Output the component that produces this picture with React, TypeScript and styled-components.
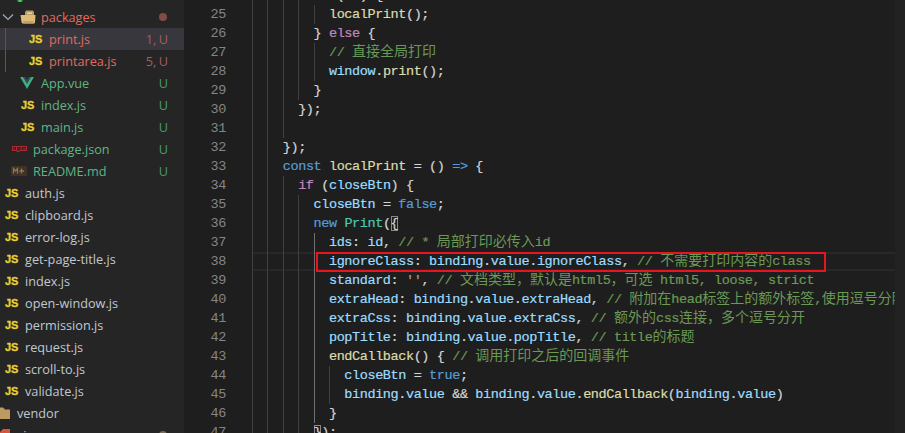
import React from 'react';
import styled, { createGlobalStyle } from 'styled-components';

const Global = createGlobalStyle`
  html, body { margin: 0; padding: 0; background: #1e1e1e; }
`;

const Page = styled.div`
  display: flex;
  width: 905px;
  height: 433px;
  overflow: hidden;
  background: #1e1e1e;
`;

/* ---------- explorer ---------- */
const Sidebar = styled.aside`
  flex: 0 0 184px;
  height: 433px;
  overflow: hidden;
  background: #252526;
  font-family: "Open Sans", "Liberation Sans", sans-serif;
  font-size: 12.7px;
`;
const Tree = styled.div`
  display: flex;
  flex-direction: column;
  margin-top: -16px;
`;
type Tone = 'plain' | 'green' | 'red';
const nameColor: Record<Tone, string> = { plain: '#c0c8d0', green: '#60b584', red: '#e06c5f' };
const badgeColor: Record<Tone, string> = { plain: '#c0c8d0', green: '#4c9a6c', red: '#a25f56' };

const Row = styled.div<{ $selected?: boolean; $guide?: boolean }>`
  flex: 0 0 22px;
  height: 22px;
  display: flex;
  align-items: center;
  padding-right: 16px;
  background-color: ${p => (p.$selected ? '#37373d' : 'transparent')};
  background-image: ${p => (p.$guide ? 'linear-gradient(#585858, #585858)' : 'none')};
  background-repeat: no-repeat;
  background-position: 5px 0;
  background-size: 1px 100%;
`;
const IconSlot = styled.span<{ $depth: number }>`
  flex: 0 0 16px;
  width: 16px;
  height: 22px;
  margin-left: ${p => 5 + p.$depth * 8}px;
  margin-right: 4px;
  display: flex;
  align-items: center;
  justify-content: flex-start;
`;
const Chevron = styled.svg`
  flex: 0 0 16px;
`;
const JsMark = styled.span`
  font-family: "Liberation Sans", sans-serif;
  font-weight: 700;
  font-size: 11px;
  -webkit-text-stroke: 0.3px #e8cf35;
  color: #e8cf35;
  line-height: 1;
`;
const Name = styled.span<{ $tone: Tone }>`
  flex: 1;
  white-space: nowrap;
  color: ${p => nameColor[p.$tone]};
`;
const Badge = styled.span<{ $tone: Tone }>`
  white-space: nowrap;
  word-spacing: -0.8px;
  color: ${p => badgeColor[p.$tone]};
`;
const Dot = styled.span<{ $color: string }>`
  width: 8px;
  height: 8px;
  border-radius: 50%;
  margin-right: 1px;
  background: ${p => p.$color};
`;
const NudgedSvg = styled.svg<{ $x?: number }>`
  flex: none;
  margin-left: ${p => p.$x ?? 0}px;
`;

const PackagesFolder = () => (
  <NudgedSvg $x={-1} width="16" height="14" viewBox="0 0 16 14">
    <path d="M5 2 L6 0.5 H13 L14 2 V6 H5 Z" fill="#b89a62" />
    <path d="M7 2.5 H12 V4 H7 Z" fill="#e8d6a8" />
    <path d="M0.5 5 H15.5 L15 12.5 Q15 13.5 14 13.5 H3 Q2 13.5 1.6 12.5 Z" fill="#dcbc78" />
    <path d="M3 11 H14 L13.5 13.5 H3.5 Z" fill="#c4a265" />
  </NudgedSvg>
);
const PlainFolder = () => (
  <NudgedSvg width="13" height="12" viewBox="0 0 13 12">
    <path d="M0 0.5 H6 L8 2.5 H13 V12 H0 Z" fill="#bd9a60" />
  </NudgedSvg>
);
const RedFolder = () => (
  <NudgedSvg width="13" height="12" viewBox="0 0 13 12">
    <path d="M0 3 H3 L6 0 H13 V12 H0 Z" fill="#d9553f" />
  </NudgedSvg>
);
const GreenMark = () => (
  <NudgedSvg width="14" height="14" viewBox="0 0 14 14">
    <path d="M1 6 H13 L9 14 H5 Z" fill="#2e9e46" />
    <path d="M6 9 H8 V14 H6 Z" fill="#56c86a" />
  </NudgedSvg>
);
const VueMark = () => (
  <NudgedSvg $x={-1} width="14" height="12" viewBox="0 0 15 13">
    <path d="M0 0 H3.4 L7.5 7 L11.6 0 H15 L7.5 13 Z" fill="#3eaf7c" />
    <path d="M3.4 0 H5.8 L7.5 3 L9.2 0 H11.6 L7.5 7 Z" fill="#34495e" />
  </NudgedSvg>
);
const NpmMark = () => (
  <NudgedSvg $x={-1} width="15" height="6" viewBox="0 0 15 6">
    <path d="M0 0 H15 V5 H7.5 V6 H4.5 V5 H0 Z" fill="#a92b2f" />
    <path d="M1.2 1 H4 V4 H3 V2 H2.4 V4 H1.2 Z M5.2 1 H8.6 V4 H6.8 V5 H5.2 Z M6.6 2 V3 H7.2 V2 Z M9.6 1 H13.8 V4 H12.8 V2 H12.2 V4 H11.4 V2 H10.8 V4 H9.6 Z" fill="#2a2526" />
  </NudgedSvg>
);
const MdMark = () => (
  <NudgedSvg $x={-2} width="16" height="10" viewBox="0 0 16 10">
    <rect x="0" y="0" width="16" height="10" rx="1" fill="#3f3325" />
    <path d="M2.5 7.5 V2.5 L4.5 5 L6.5 2.5 V7.5" fill="none" stroke="#8d7753" strokeWidth="1.3" />
    <path d="M10.5 2.5 V7.5 M8.5 5 H13" fill="none" stroke="#8d7753" strokeWidth="1.3" />
  </NudgedSvg>
);

type Entry = {
  name: string;
  depth: number;
  icon: 'js' | 'vue' | 'npm' | 'md' | 'pkg' | 'vendor' | 'red' | 'green';
  tone?: Tone;
  badge?: string;
  dot?: string;
  open?: boolean;
  selected?: boolean;
  guide?: boolean;
};

const entries: Entry[] = [
  { name: 'src', depth: 1, icon: 'green', tone: 'green' },
  { name: 'packages', depth: 0, icon: 'pkg', tone: 'red', dot: '#7f4c48', open: true },
  { name: 'print.js', depth: 3, icon: 'js', tone: 'red', badge: '1, U', selected: true, guide: true },
  { name: 'printarea.js', depth: 3, icon: 'js', tone: 'red', badge: '5, U', guide: true },
  { name: 'App.vue', depth: 2, icon: 'vue', tone: 'green', badge: 'U' },
  { name: 'index.js', depth: 2, icon: 'js', tone: 'green', badge: 'U' },
  { name: 'main.js', depth: 2, icon: 'js', tone: 'green', badge: 'U' },
  { name: 'package.json', depth: 1, icon: 'npm', tone: 'green', badge: 'U' },
  { name: 'README.md', depth: 1, icon: 'md', tone: 'green', badge: 'U' },
  { name: 'auth.js', depth: 0, icon: 'js' },
  { name: 'clipboard.js', depth: 0, icon: 'js' },
  { name: 'error-log.js', depth: 0, icon: 'js' },
  { name: 'get-page-title.js', depth: 0, icon: 'js' },
  { name: 'index.js', depth: 0, icon: 'js' },
  { name: 'open-window.js', depth: 0, icon: 'js' },
  { name: 'permission.js', depth: 0, icon: 'js' },
  { name: 'request.js', depth: 0, icon: 'js' },
  { name: 'scroll-to.js', depth: 0, icon: 'js' },
  { name: 'validate.js', depth: 0, icon: 'js' },
  { name: 'vendor', depth: -1, icon: 'vendor' },
  { name: 'views', depth: -1, icon: 'red', dot: '#7c6c56' },
];

const iconFor = (icon: Entry['icon']) => {
  switch (icon) {
    case 'js': return <JsMark>JS</JsMark>;
    case 'vue': return <VueMark />;
    case 'npm': return <NpmMark />;
    case 'md': return <MdMark />;
    case 'pkg': return <PackagesFolder />;
    case 'vendor': return <PlainFolder />;
    case 'red': return <RedFolder />;
    default: return <GreenMark />;
  }
};

/* ---------- editor ---------- */
const Editor = styled.main`
  flex: 1;
  min-width: 0;
  display: flex;
  height: 433px;
  overflow: hidden;
  font-family: "Liberation Mono", "Noto Sans CJK SC", monospace;
  font-size: 13.5px;
  letter-spacing: -0.4px;
`;
const Gutter = styled.div`
  flex: 0 0 42px;
  margin-top: -14px;
  color: #858585;
`;
const GutterNum = styled.div`
  height: 19px;
  line-height: 19px;
  text-align: right;
`;
const GutterGap = styled.div`
  flex: 0 0 26px;
`;
const Code = styled.div`
  flex: 1;
  min-width: 0;
  margin-top: -14px;
  overflow: hidden;
`;
const Line = styled.div<{ $current?: boolean }>`
  position: relative;
  height: 19px;
  line-height: 19px;
  display: flex;
  white-space: pre;
  box-shadow: ${p => (p.$current ? 'inset 0 2px #282828, inset 0 -2px #282828' : 'none')};
`;
const Guide = styled.span<{ $active?: boolean }>`
  flex: 0 0 15.4px;
  width: 15.4px;
  height: 19px;
  box-sizing: border-box;
  border-left: 1px solid ${p => (p.$active ? '#707070' : '#404040')};
`;
const tokenColors: Record<string, string> = {
  k: '#569cd6',
  c: '#c586c0',
  f: '#dcdcaa',
  v: '#9cdcfe',
  p: '#d4d4d4',
  n: '#6a9955',
  s: '#ce9178',
  t: '#4ec9b0',
  b: '#d4d4d4',
};
const Token = styled.span<{ $k: string }>`
  color: ${p => tokenColors[p.$k]};
  -webkit-text-stroke: 0.2px ${p => tokenColors[p.$k]};
  box-shadow: ${p => (p.$k === 'b' ? 'inset 0 0 0 1px #888888' : 'none')};
`;
const Cjk = styled.span`
  font-size: 14px;
  letter-spacing: 0;
  -webkit-text-stroke: 0;
`;
const RedBox = styled.div`
  position: absolute;
  left: 64px;
  top: 0;
  width: 510px;
  height: 20px;
  box-sizing: border-box;
  border: 2px solid #e8141f;
  pointer-events: none;
`;
const Scrollbar = styled.div`
  flex: 0 0 10px;
  background: #222222;
`;

type Tok = [string, string];
type CodeLine = { n: number; col: number; active?: boolean; toks: Tok[]; current?: boolean };

const bv = (prop: string): Tok[] => [['v', 'binding'], ['p', '.'], ['v', 'value'], ['p', '.'], ['v', prop]];

const lines: CodeLine[] = [
  { n: 24, col: 8, toks: [['c', 'if'], ['p', ' ('], ['v', 'id'], ['p', ') {']] },
  { n: 25, col: 10, toks: [['f', 'localPrint'], ['p', '();']] },
  { n: 26, col: 8, toks: [['p', '} '], ['c', 'else'], ['p', ' {']] },
  { n: 27, col: 10, toks: [['n', '// 直接全局打印']] },
  { n: 28, col: 10, toks: [['v', 'window'], ['p', '.'], ['f', 'print'], ['p', '();']] },
  { n: 29, col: 8, toks: [['p', '}']] },
  { n: 30, col: 6, toks: [['p', '});']] },
  { n: 31, col: 6, toks: [] },
  { n: 32, col: 4, toks: [['p', '});']] },
  { n: 33, col: 4, toks: [['k', 'const'], ['p', ' '], ['f', 'localPrint'], ['p', ' = () '], ['k', '=>'], ['p', ' {']] },
  { n: 34, col: 6, toks: [['c', 'if'], ['p', ' ('], ['v', 'closeBtn'], ['p', ') {']] },
  { n: 35, col: 8, toks: [['v', 'closeBtn'], ['p', ' = '], ['k', 'false'], ['p', ';']] },
  { n: 36, col: 8, toks: [['k', 'new'], ['p', ' '], ['t', 'Print'], ['p', '('], ['b', '{']] },
  { n: 37, col: 10, active: true, toks: [['v', 'ids'], ['p', ': '], ['v', 'id'], ['p', ', '], ['n', '// * 局部打印必传入id']] },
  { n: 38, col: 10, active: true, current: true, toks: [['v', 'ignoreClass'], ['p', ': '], ...bv('ignoreClass'), ['p', ', '], ['n', '// 不需要打印内容的class']] },
  { n: 39, col: 10, active: true, toks: [['v', 'standard'], ['p', ': '], ['s', "''"], ['p', ', '], ['n', '// 文档类型，默认是html5，可选 html5, loose, strict']] },
  { n: 40, col: 10, active: true, toks: [['v', 'extraHead'], ['p', ': '], ...bv('extraHead'), ['p', ', '], ['n', '// 附加在head标签上的额外标签,使用逗号分隔']] },
  { n: 41, col: 10, active: true, toks: [['v', 'extraCss'], ['p', ': '], ...bv('extraCss'), ['p', ', '], ['n', '// 额外的css连接，多个逗号分开']] },
  { n: 42, col: 10, active: true, toks: [['v', 'popTitle'], ['p', ': '], ...bv('popTitle'), ['p', ', '], ['n', '// title的标题']] },
  { n: 43, col: 10, active: true, toks: [['f', 'endCallback'], ['p', '() { '], ['n', '// 调用打印之后的回调事件']] },
  { n: 44, col: 12, active: true, toks: [['v', 'closeBtn'], ['p', ' = '], ['k', 'true'], ['p', ';']] },
  { n: 45, col: 12, active: true, toks: [['v', 'binding'], ['p', '.'], ['v', 'value'], ['p', ' && '], ['v', 'binding'], ['p', '.'], ['v', 'value'], ['p', '.'], ['f', 'endCallback'], ['p', '('], ['v', 'binding'], ['p', '.'], ['v', 'value'], ['p', ')']] },
  { n: 46, col: 10, active: true, toks: [['p', '}']] },
  { n: 47, col: 8, toks: [['b', '}'], ['p', ');']] },
];

const splitCjk = (text: string) =>
  text.split(/([\u3000-\u9fff\uff00-\uffef]+)/).map((part, i) =>
    i % 2 === 1 ? <Cjk key={i}>{part}</Cjk> : part
  );

export default function App() {
  return (
    <Page>
      <Global />
      <Sidebar>
        <Tree>
          {entries.map((e, i) => (
            <Row key={i} $selected={e.selected} $guide={e.guide}>
              {e.open && (
                <Chevron width="16" height="16" viewBox="0 0 16 16">
                  <path d="M3 5.5 L8 10.5 L13 5.5" fill="none" stroke="#a4b0bd" strokeWidth="1.1" />
                </Chevron>
              )}
              <IconSlot $depth={e.depth}>{iconFor(e.icon)}</IconSlot>
              <Name $tone={e.tone ?? 'plain'}>{e.name}</Name>
              {e.badge && <Badge $tone={e.tone ?? 'plain'}>{e.badge}</Badge>}
              {e.dot && <Dot $color={e.dot} />}
            </Row>
          ))}
        </Tree>
      </Sidebar>
      <Editor>
        <Gutter>
          {lines.map(l => <GutterNum key={l.n}>{l.n}</GutterNum>)}
        </Gutter>
        <GutterGap />
        <Code>
          {lines.map(l => (
            <Line key={l.n} $current={l.current}>
              {Array.from({ length: l.col / 2 }, (_, g) => (
                <Guide key={g} $active={l.active && g === 4} />
              ))}
              <span>
                {l.toks.map((t, i) => (
                  <Token key={i} $k={t[0]}>{splitCjk(t[1])}</Token>
                ))}
              </span>
              {l.current && <RedBox />}
            </Line>
          ))}
        </Code>
        <Scrollbar />
      </Editor>
    </Page>
  );
}
